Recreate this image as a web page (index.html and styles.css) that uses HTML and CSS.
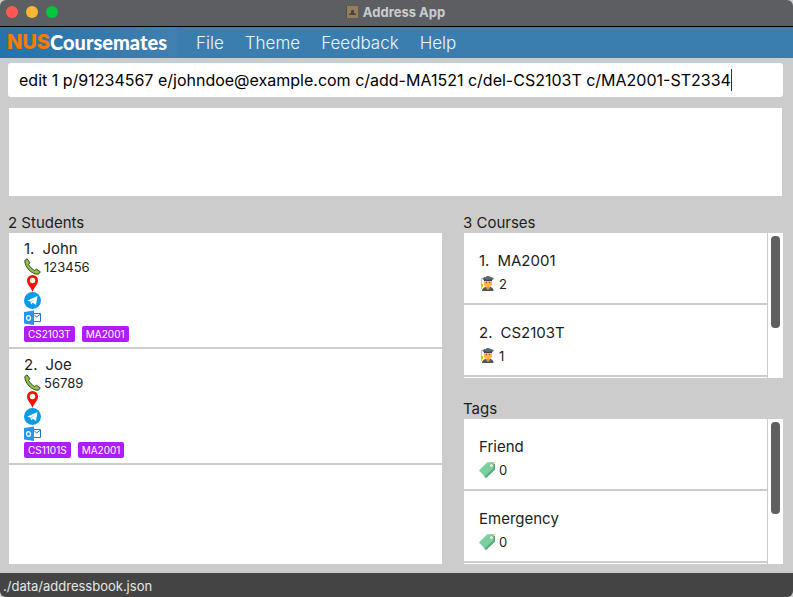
FILE: index.html
```
<!DOCTYPE html>
<html lang="en">
<head>
<meta charset="utf-8">
<title>Address App</title>
<link rel="stylesheet" href="styles.css">
</head>
<body>
<svg class="defs" aria-hidden="true">
  <symbol id="phone" viewBox="0 0 17 17">
    <path d="M.8 2.500 3 .8 5.800 4.500 4.600 6.500C6 9 8 11 10.500 12.400L12.500 11.200 16.300 13.800 14.500 16.200C8 17 .5 9 .8 2.500Z" fill="#8bc34a" stroke="#1c2a0c" stroke-width=".8"/>
  </symbol>
  <symbol id="pin" viewBox="0 0 17 17">
    <path d="M8.500 17C7 12 3 10 3 5.500A5.500 5.500 0 0 1 14 5.500C14 10 10 12 8.500 17Z" fill="#f90f05"/>
    <circle cx="8.500" cy="5.500" r="2.700" fill="#fff"/>
  </symbol>
  <symbol id="telegram" viewBox="0 0 17 17">
    <circle cx="8.500" cy="8.500" r="8.500" fill="#0a9be8"/>
    <path d="M3.500 8.500 13.500 4 12 13 8.800 10.800 7 12.500 6.500 9.800Z" fill="#fff"/>
    <path d="M6.500 9.800 11.500 6 7.500 10.500Z" fill="#9ed6f5"/>
  </symbol>
  <symbol id="mail" viewBox="0 0 17 17">
    <path d="M9 4.500H16.500V12.500H9" fill="#fff" stroke="#1976d2"/>
    <path d="M10 5.500 12.500 8 16 5.500" fill="none" stroke="#1976d2"/>
    <path d="M0 3 10 1.500V16L0 14.500Z" fill="#2196f3"/>
    <ellipse cx="4.500" cy="9" rx="2" ry="2.300" fill="none" stroke="#fff" stroke-width="1.200"/>
  </symbol>
  <symbol id="graduate" viewBox="0 0 17 17">
    <path d="M3 16C3 13 6 12 6.500 12H11.500C12 12 14.500 13 14.500 16Z" fill="#455a64"/>
    <path d="M7 11H11V13L9 15 7 13Z" fill="#ff9800"/>
    <rect x="5" y="4" width="8" height="8" rx="3" fill="#ffb74d"/>
    <circle cx="7.500" cy="7.500" r=".6" fill="#784719"/><circle cx="10.500" cy="7.500" r=".6" fill="#784719"/>
    <path d="M9 1 15 3.500 13 5V6H5V5L3 3.500Z" fill="#37474f"/>
    <path d="M9 1 15 3.500 9 5 3 3.500Z" fill="#546e7a"/>
    <path d="M3 3.500H2.500V14M2.500 9V12" fill="none" stroke="#ffca28"/>
    <path d="M2 9H4V12H2Z" fill="#ffb300"/>
  </symbol>
  <symbol id="tag" viewBox="0 0 17 17">
    <path d="M0 9.500 8 1.500 14 1 16 3V8.500L7 17Z" fill="#7bcf9e"/>
    <path d="M16 3V8.500L7 17 5.500 15.500 14.500 7.500V3Z" fill="#58aa7c"/>
    <circle cx="12.500" cy="4.500" r="1.300" fill="#fff"/>
    <path d="M12.500 4.500 16.500 .5" stroke="#e8b95b"/>
  </symbol>
</svg>

<header class="titlebar">
  <div class="lights"><span class="light close"></span><span class="light minimise"></span><span class="light zoom"></span></div>
  <div class="title">
    <svg class="book" viewBox="0 0 12 12" aria-hidden="true"><rect width="12" height="12" rx="1" fill="#967d5c"/><rect width="1" height="12" fill="#4f4b49"/><path d="M3 9V8L5 7V5.500A1.500 1.800 0 1 1 8 5.500V7L10 8V9Z" fill="#4c443d"/></svg>
    <span>Address App</span>
  </div>
</header>

<nav class="menubar">
  <div class="logo"><span class="nus">NUS</span><span class="mates">Coursemates</span></div>
  <div class="menus">
    <button class="menu" type="button">File</button>
    <button class="menu" type="button">Theme</button>
    <button class="menu" type="button">Feedback</button>
    <button class="menu" type="button">Help</button>
  </div>
</nav>

<main class="content">
  <div class="command">
    <input class="command-input" type="text" aria-label="Command" spellcheck="false" value="edit 1 p/91234567 e/johndoe@example.com c/add-MA1521 c/del-CS2103T c/MA2001-ST2334">
    <span class="caret"></span>
  </div>
  <output class="result" aria-label="Result"></output>

  <div class="columns">
    <section class="panel students">
      <h2 class="heading">2 Students</h2>
      <ol class="list">
        <li class="student">
          <h3 class="name"><span>1.</span><span>John</span></h3>
          <p class="row"><svg class="icon"><use href="#phone"/></svg>123456</p>
          <p class="row"><svg class="icon"><use href="#pin"/></svg></p>
          <p class="row"><svg class="icon"><use href="#telegram"/></svg></p>
          <p class="row"><svg class="icon"><use href="#mail"/></svg></p>
          <div class="chips"><span class="chip">CS2103T</span><span class="chip">MA2001</span></div>
        </li>
        <li class="student">
          <h3 class="name"><span>2.</span><span>Joe</span></h3>
          <p class="row"><svg class="icon"><use href="#phone"/></svg>56789</p>
          <p class="row"><svg class="icon"><use href="#pin"/></svg></p>
          <p class="row"><svg class="icon"><use href="#telegram"/></svg></p>
          <p class="row"><svg class="icon"><use href="#mail"/></svg></p>
          <div class="chips"><span class="chip">CS1101S</span><span class="chip">MA2001</span></div>
        </li>
      </ol>
    </section>

    <div class="side">
      <section class="panel">
        <h2 class="heading">3 Courses</h2>
        <div class="scroller">
          <ol class="list">
            <li class="item"><h3 class="name"><span>1.</span><span>MA2001</span></h3><p class="row"><svg class="icon"><use href="#graduate"/></svg>2</p></li>
            <li class="item"><h3 class="name"><span>2.</span><span>CS2103T</span></h3><p class="row"><svg class="icon"><use href="#graduate"/></svg>1</p></li>
          </ol>
          <div class="track"><div class="thumb"></div></div>
        </div>
      </section>
      <section class="panel">
        <h2 class="heading">Tags</h2>
        <div class="scroller">
          <ul class="list">
            <li class="item"><h3 class="name">Friend</h3><p class="row"><svg class="icon"><use href="#tag"/></svg>0</p></li>
            <li class="item"><h3 class="name">Emergency</h3><p class="row"><svg class="icon"><use href="#tag"/></svg>0</p></li>
          </ul>
          <div class="track"><div class="thumb"></div></div>
        </div>
      </section>
    </div>
  </div>
</main>

<footer class="status">./data/addressbook.json</footer>
</body>
</html>
```
FILE: styles.css
```
* { box-sizing: border-box; }

body {
  margin: 0;
  min-height: 100vh;
  display: flex;
  flex-direction: column;
  background: #ccc;
  color: #1c1c1c;
  font-family: Inter, "Liberation Sans", sans-serif;
  font-size: 15px;
}

h2, h3, p, ol, ul { margin: 0; padding: 0; font-weight: 400; list-style: none; }

.defs { position: absolute; width: 0; height: 0; }

.titlebar {
  display: grid;
  grid-template-columns: 1fr auto 1fr;
  align-items: center;
  height: 27px;
  padding: 0 8px 2px 6px;
  background: #5d5e62;
  border-bottom: 1px solid #000;
  border-radius: 6px 6px 0 0;
}
.lights { display: flex; gap: 8px; }
.light { width: 12px; height: 12px; border-radius: 50%; }
.close { background: #ff5a52; }
.minimise { background: #fdb735; }
.zoom { background: #04c63f; }
.title { display: flex; align-items: center; gap: 5px; color: #ccccce; font-size: 13px; font-weight: 700; }
.book { width: 12px; height: 12px; }

.menubar { display: flex; height: 31px; background: #3a7eb0; }
.logo {
  display: flex;
  align-items: center;
  width: 177px;
  padding: 0 0 2px 7px;
  background: linear-gradient(90deg, #2473aa, #417fb0);
  font-size: 20px;
  line-height: 24px;
}
.nus { color: #f57c00; font-weight: 800; }
.mates { color: #fff; font-family: Lato, sans-serif; font-weight: 900; }
.menus { display: flex; gap: 21px; padding-left: 19px; }
.menu {
  padding: 0;
  border: 0;
  background: none;
  color: #f0f5f9;
  font: 300 17px Inter, sans-serif;
}

.content { flex: 1; display: flex; flex-direction: column; padding: 5px 10px 9px 8px; }
.command {
  display: flex;
  align-items: center;
  height: 34px;
  padding: 0 11px;
  background: #fff;
  border-radius: 3px;
  overflow: hidden;
}
.command-input {
  field-sizing: content;
  min-width: 0;
  padding: 0;
  border: 0;
  outline: 0;
  background: none;
  color: #000;
  font: 400 16px Inter, sans-serif;
}
.caret { flex: none; width: 1px; height: 22px; background: #333; }
.result { display: block; height: 88px; margin: 11px 1px 15px; background: #fff; }

.columns { flex: 1; display: grid; grid-template-columns: 434fr 320fr; gap: 21px; min-height: 0; }
.side { display: flex; flex-direction: column; gap: 19px; }
.panel { flex: 1; display: flex; flex-direction: column; }
.heading { padding-top: 2px; font-size: 15px; line-height: 20px; }
.list { flex: 1; background: #fff; }
.students .list { margin-left: 1px; }
.scroller { flex: 1; display: flex; }
.scroller .list { margin: 0 1px; }
.track { width: 15px; padding: 3px; background: #fff; }
.thumb { height: 92px; border-radius: 4px; background: #606060; }

.student { padding: 6px 15px; height: 116px; border-bottom: 2px solid #ccc; }
.item { height: 72px; padding: 18px 15px 0; border-bottom: 2px solid #ccc; }
.name { display: flex; gap: 8px; font-size: 15px; line-height: 19px; }
.item .name { margin-bottom: 5px; }
.row { display: flex; align-items: center; gap: 3px; height: 17px; font-size: 13px; }
.icon { width: 17px; height: 17px; }
.chips { display: flex; gap: 7px; }
.chip { height: 16px; padding: 0 4px; border-radius: 2px; background: #b01cff; color: #fff; font-size: 10px; line-height: 16px; }

.status { height: 24px; padding: 0 3px; background: #444; color: #e6e6e6; font-size: 13px; line-height: 26px; border-radius: 0 0 6px 6px; }
```
